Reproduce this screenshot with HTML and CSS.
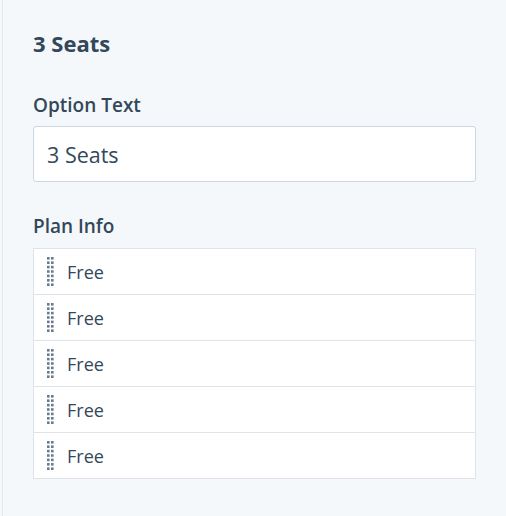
FILE: index.html
```html
<!DOCTYPE html>
<html>
<head>
<meta charset="utf-8">
<link rel="stylesheet" href="styles.css">
</head>
<body>
<div class="panel">
  <h2 class="title">3 Seats</h2>
  <label class="label label-first">Option Text</label>
  <div class="input">3 Seats</div>
  <label class="label label-second">Plan Info</label>
  <ul class="list">
    <li class="row"><svg class="handle" width="7" height="29" viewBox="0 0 7 29"><g fill="#6b7b8d"><rect x="0" y="0" width="2.6" height="2.6"/><rect x="4" y="0" width="2.6" height="2.6"/><rect x="0" y="4.4" width="2.6" height="2.6"/><rect x="4" y="4.4" width="2.6" height="2.6"/><rect x="0" y="8.8" width="2.6" height="2.6"/><rect x="4" y="8.8" width="2.6" height="2.6"/><rect x="0" y="13.2" width="2.6" height="2.6"/><rect x="4" y="13.2" width="2.6" height="2.6"/><rect x="0" y="17.6" width="2.6" height="2.6"/><rect x="4" y="17.6" width="2.6" height="2.6"/><rect x="0" y="22" width="2.6" height="2.6"/><rect x="4" y="22" width="2.6" height="2.6"/><rect x="0" y="26.4" width="2.6" height="2.6"/><rect x="4" y="26.4" width="2.6" height="2.6"/></g></svg><span class="row-text">Free</span></li>
    <li class="row"><svg class="handle" width="7" height="29" viewBox="0 0 7 29"><g fill="#6b7b8d"><rect x="0" y="0" width="2.6" height="2.6"/><rect x="4" y="0" width="2.6" height="2.6"/><rect x="0" y="4.4" width="2.6" height="2.6"/><rect x="4" y="4.4" width="2.6" height="2.6"/><rect x="0" y="8.8" width="2.6" height="2.6"/><rect x="4" y="8.8" width="2.6" height="2.6"/><rect x="0" y="13.2" width="2.6" height="2.6"/><rect x="4" y="13.2" width="2.6" height="2.6"/><rect x="0" y="17.6" width="2.6" height="2.6"/><rect x="4" y="17.6" width="2.6" height="2.6"/><rect x="0" y="22" width="2.6" height="2.6"/><rect x="4" y="22" width="2.6" height="2.6"/><rect x="0" y="26.4" width="2.6" height="2.6"/><rect x="4" y="26.4" width="2.6" height="2.6"/></g></svg><span class="row-text">Free</span></li>
    <li class="row"><svg class="handle" width="7" height="29" viewBox="0 0 7 29"><g fill="#6b7b8d"><rect x="0" y="0" width="2.6" height="2.6"/><rect x="4" y="0" width="2.6" height="2.6"/><rect x="0" y="4.4" width="2.6" height="2.6"/><rect x="4" y="4.4" width="2.6" height="2.6"/><rect x="0" y="8.8" width="2.6" height="2.6"/><rect x="4" y="8.8" width="2.6" height="2.6"/><rect x="0" y="13.2" width="2.6" height="2.6"/><rect x="4" y="13.2" width="2.6" height="2.6"/><rect x="0" y="17.6" width="2.6" height="2.6"/><rect x="4" y="17.6" width="2.6" height="2.6"/><rect x="0" y="22" width="2.6" height="2.6"/><rect x="4" y="22" width="2.6" height="2.6"/><rect x="0" y="26.4" width="2.6" height="2.6"/><rect x="4" y="26.4" width="2.6" height="2.6"/></g></svg><span class="row-text">Free</span></li>
    <li class="row"><svg class="handle" width="7" height="29" viewBox="0 0 7 29"><g fill="#6b7b8d"><rect x="0" y="0" width="2.6" height="2.6"/><rect x="4" y="0" width="2.6" height="2.6"/><rect x="0" y="4.4" width="2.6" height="2.6"/><rect x="4" y="4.4" width="2.6" height="2.6"/><rect x="0" y="8.8" width="2.6" height="2.6"/><rect x="4" y="8.8" width="2.6" height="2.6"/><rect x="0" y="13.2" width="2.6" height="2.6"/><rect x="4" y="13.2" width="2.6" height="2.6"/><rect x="0" y="17.6" width="2.6" height="2.6"/><rect x="4" y="17.6" width="2.6" height="2.6"/><rect x="0" y="22" width="2.6" height="2.6"/><rect x="4" y="22" width="2.6" height="2.6"/><rect x="0" y="26.4" width="2.6" height="2.6"/><rect x="4" y="26.4" width="2.6" height="2.6"/></g></svg><span class="row-text">Free</span></li>
    <li class="row"><svg class="handle" width="7" height="29" viewBox="0 0 7 29"><g fill="#6b7b8d"><rect x="0" y="0" width="2.6" height="2.6"/><rect x="4" y="0" width="2.6" height="2.6"/><rect x="0" y="4.4" width="2.6" height="2.6"/><rect x="4" y="4.4" width="2.6" height="2.6"/><rect x="0" y="8.8" width="2.6" height="2.6"/><rect x="4" y="8.8" width="2.6" height="2.6"/><rect x="0" y="13.2" width="2.6" height="2.6"/><rect x="4" y="13.2" width="2.6" height="2.6"/><rect x="0" y="17.6" width="2.6" height="2.6"/><rect x="4" y="17.6" width="2.6" height="2.6"/><rect x="0" y="22" width="2.6" height="2.6"/><rect x="4" y="22" width="2.6" height="2.6"/><rect x="0" y="26.4" width="2.6" height="2.6"/><rect x="4" y="26.4" width="2.6" height="2.6"/></g></svg><span class="row-text">Free</span></li>
  </ul>
</div>
</body>
</html>
```

FILE: styles.css
```css
html, body {
  margin: 0;
  padding: 0;
  background: #f5f8fa;
}
body {
  width: 506px;
  height: 516px;
  overflow: hidden;
  padding-left: 2px;
  box-sizing: border-box;
  font-family: "Open Sans", "Liberation Sans", sans-serif;
  color: #33475b;
}
.panel {
  height: 516px;
  box-sizing: border-box;
  border-left: 1px solid #e5e9ee;
  padding: 29px 30px 0 30px;
  display: flex;
  flex-direction: column;
}
.title {
  margin: 0;
  font-size: 22px;
  line-height: 28px;
  font-weight: 700;
}
.label {
  display: block;
  font-size: 19px;
  line-height: 24px;
  font-weight: 600;
}
.label-first {
  margin-top: 36px;
}
.label-second {
  margin-top: 32px;
}
.input {
  margin-top: 9px;
  height: 56px;
  box-sizing: border-box;
  border: 1px solid #cbd6e2;
  border-radius: 3px;
  background: #ffffff;
  padding: 0 13px;
  display: flex;
  align-items: center;
  font-size: 21.5px;
}
.list {
  list-style: none;
  margin: 10px 0 0 0;
  padding: 0;
  border: 1px solid #dfe3eb;
  background: #ffffff;
}
.row {
  height: 45px;
  display: flex;
  align-items: center;
  padding-left: 13px;
  gap: 13px;
}
.row + .row {
  border-top: 1px solid #dfe3eb;
}
.handle {
  flex: none;
  display: block;
}
.row-text {
  font-size: 18px;
}
```
